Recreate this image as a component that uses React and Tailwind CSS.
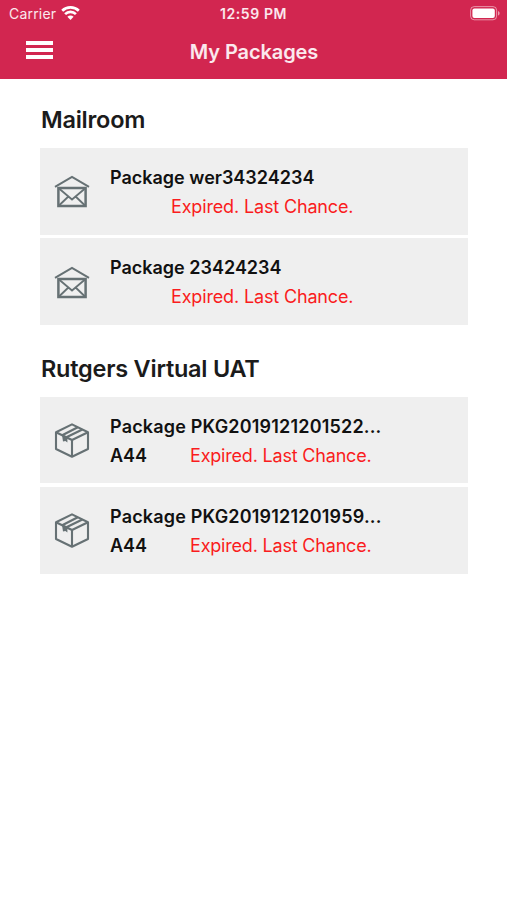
import React from "react";

const sections = [
  {
    title: "Mailroom",
    icon: "mail",
    packages: [
      { name: "Package wer34324234", status: "Expired. Last Chance." },
      { name: "Package 23424234", status: "Expired. Last Chance." },
    ],
  },
  {
    title: "Rutgers Virtual UAT",
    icon: "box",
    packages: [
      { name: "Package PKG2019121201522...", code: "A44", status: "Expired. Last Chance." },
      { name: "Package PKG2019121201959...", code: "A44", status: "Expired. Last Chance." },
    ],
  },
];

function WifiIcon() {
  return (
    <svg className="w-[19px] h-[15px]" viewBox="0 0 19 15" fill="none" stroke="white" strokeWidth="2.7">
      <path d="M1.2 4.8C5.8 0.3 13.2 0.3 17.8 4.8" />
      <path d="M4.1 8.1C7.1 5.2 11.9 5.2 14.9 8.1" />
      <path d="M6.4 10.7C8.2 9.1 10.8 9.1 12.6 10.7L9.5 14Z" fill="white" stroke="none" />
    </svg>
  );
}

function BatteryIcon() {
  return (
    <svg className="w-[31px] h-[15px]" viewBox="0 0 31 15" fill="none">
      <rect x="0.6" y="0.6" width="26" height="13.2" rx="3.6" stroke="white" strokeOpacity="0.5" />
      <rect x="2.4" y="2.4" width="22.4" height="9.6" rx="2" fill="white" />
      <path d="M28 5v4.6c2.2-.8 2.2-3.8 0-4.6z" fill="white" fillOpacity="0.55" />
    </svg>
  );
}

function MailIcon() {
  return (
    <svg className="w-9 h-9" viewBox="0 0 36 36" fill="none" stroke="#667174" strokeWidth="2">
      <path d="M1 13.8L18 3.8L35 13.8" />
      <path d="M4.4 15H31.6V33H4.4Z" strokeWidth="2.5" />
      <path d="M5 15.5L18 26.5L31 15.5M5 32.5L14.4 23.5M31 32.5L21.6 23.5" strokeWidth="1.8" />
    </svg>
  );
}

function BoxIcon() {
  return (
    <svg className="w-9 h-9" viewBox="0 0 36 36" fill="none" stroke="#667174" strokeWidth="2.1" strokeLinejoin="round">
      <path d="M18 2.4L34 10.2V27L18 34.8L2 27V10.2Z" />
      <path d="M2 10.2L18 18L34 10.2M18 18V34.5" />
      {/* tape strip */}
      <path d="M8.2 13.2L23.8 5.2M12.4 15.3L28.4 7.4" strokeWidth="2.2" />
      <path d="M8 13L13.4 15.4V20.6L11.4 19L9 19.4Z" fill="#667174" stroke="none" />
    </svg>
  );
}

function PackageCard({ item, icon }) {
  return (
    <div className="flex items-center h-[86.5px] bg-[#efefef] pl-3.5">
      {icon === "mail" ? <MailIcon /> : <BoxIcon />}
      <div className="ml-5 pt-px text-[18px] leading-[29px]">
        {item.code ? (
          <>
            <p className="font-semibold tracking-[0.18px] text-[#111] whitespace-nowrap">{item.name}</p>
            <p className="flex">
              <span className="w-20 font-semibold text-[#111]">{item.code}</span>
              <span className="tracking-[-0.19px] text-[#fa1c20]">{item.status}</span>
            </p>
          </>
        ) : (
          <>
            <p className="font-semibold text-[#111] whitespace-nowrap">{item.name}</p>
            <p className="ml-[61px] tracking-[-0.15px] text-[#fa1c20]">{item.status}</p>
          </>
        )}
      </div>
    </div>
  );
}

export default function App() {
  return (
    <div className="min-h-screen bg-white font-['Inter',sans-serif]">
      {/* Header */}
      <header className="h-[79px] bg-[#d22650] text-white">
        <div className="grid grid-cols-3 items-center h-[27px] pl-[9px] pr-[6px]">
          <div className="flex items-center gap-[5px] text-[14px]">
            <span className="tracking-[0.2px] text-white/90">Carrier</span>
            <WifiIcon />
          </div>
          <span className="text-center text-[14px] font-semibold tracking-[0.6px] -ml-[3px] text-white/90">12:59 PM</span>
          <div className="flex justify-end">
            <BatteryIcon />
          </div>
        </div>
        <div className="grid grid-cols-[1fr_auto_1fr] items-center h-[50px] px-[26px]">
          <button className="flex flex-col gap-[3.4px] w-[27px] -mt-1" aria-label="Menu">
            <span className="h-1 w-full bg-white" />
            <span className="h-1 w-full bg-white" />
            <span className="h-1 w-full bg-white" />
          </button>
          <h1 className="text-[20px] font-semibold tracking-[-0.1px] pl-px text-white/90">My Packages</h1>
        </div>
      </header>

      {/* Package list */}
      <main className="pl-10 pr-[39px] pt-[21px]">
        {sections.map((section) => (
          <section key={section.title} className="mb-6">
            <h2 className="h-12 pl-px pt-[5px] text-[23.5px] leading-[30px] font-semibold tracking-[-0.24px] text-[#1b1b1b]">
              {section.title}
            </h2>
            <div className="flex flex-col gap-[3.8px]">
              {section.packages.map((item) => (
                <PackageCard key={item.name} item={item} icon={section.icon} />
              ))}
            </div>
          </section>
        ))}
      </main>
    </div>
  );
}
